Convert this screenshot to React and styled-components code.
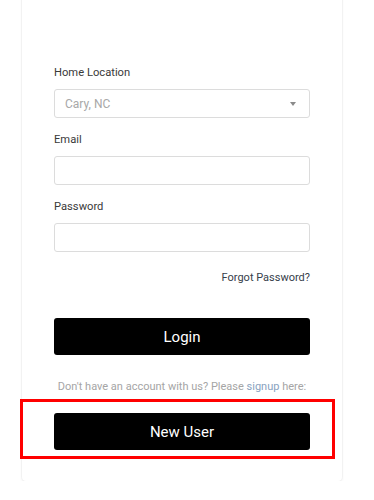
import styled, { createGlobalStyle } from "styled-components";

const GlobalStyle = createGlobalStyle`
  body {
    margin: 0;
    background: #ffffff;
    font-family: Roboto, "Liberation Sans", Arial, sans-serif;
  }
`;

export default function App() {
    return (
        <>
            <GlobalStyle />
            <Page>
                <Card>
                    <Field>
                        <Label>Home Location</Label>
                        <SelectBox>
                            <Placeholder>Cary, NC</Placeholder>
                            <Caret />
                        </SelectBox>
                    </Field>
                    <Field>
                        <Label>Email</Label>
                        <Input type="email" />
                    </Field>
                    <Field>
                        <Label>Password</Label>
                        <Input type="password" />
                    </Field>
                    <ForgotRow>
                        <ForgotLink href="#">Forgot Password?</ForgotLink>
                    </ForgotRow>
                    <BlackButton>Login</BlackButton>
                    <SignupText>
                        Don't have an account with us? Please <SignupLink href="#">signup</SignupLink> here:
                    </SignupText>
                    <Highlighted>
                        <BlackButton>New User</BlackButton>
                    </Highlighted>
                </Card>
            </Page>
        </>
    );
}

const Page = styled.div`
  padding: 0 0 0 22px;
`;

const Card = styled.div`
  width: 320px;
  box-sizing: border-box;
  margin-top: -10px;
  padding: 75px 32px 31px;
  background: #fff;
  border-radius: 4px;
  box-shadow: 0 1px 3px rgba(0, 0, 0, 0.08), 0 0 0 1px rgba(0, 0, 0, 0.025);
  display: flex;
  flex-direction: column;
`;

const Field = styled.div`
  display: flex;
  flex-direction: column;
  gap: 8px;
  margin-bottom: 14px;
`;

const Label = styled.label`
  font-size: 11.2px;
  line-height: 16px;
  color: #3a3a3a;
`;

const SelectBox = styled.div`
  height: 29px;
  box-sizing: border-box;
  border: 1px solid #dcdcdc;
  border-radius: 3px;
  display: flex;
  align-items: center;
  justify-content: space-between;
  padding: 0 13px 0 10px;
`;

const Placeholder = styled.span`
  font-size: 12px;
  color: #a8a8a8;
`;

const Caret = styled.span`
  width: 0;
  height: 0;
  border-left: 3px solid transparent;
  border-right: 3px solid transparent;
  border-top: 4px solid #8a8a8a;
`;

const Input = styled.input`
  height: 29px;
  box-sizing: border-box;
  border: 1px solid #dcdcdc;
  border-radius: 3px;
  padding: 0 10px;
  font-size: 12px;
  outline: none;
`;

const ForgotRow = styled.div`
  display: flex;
  justify-content: flex-end;
  margin-top: 4px;
`;

const ForgotLink = styled.a`
  font-size: 11px;
  line-height: 16px;
  color: #36404a;
  text-decoration: none;
`;

const BlackButton = styled.button`
  width: 100%;
  height: 37px;
  margin-top: 0;
  border: none;
  border-radius: 3px;
  background: #000;
  color: #fff;
  font-family: Roboto, "Liberation Sans", Arial, sans-serif;
  font-size: 15px;
  cursor: pointer;
  ${ForgotRow} + & {
    margin-top: 32px;
  }
`;

const SignupText = styled.p`
  margin: 24px 0 0;
  text-align: center;
  font-size: 11px;
  line-height: 16px;
  color: #a5a5a5;
`;

const SignupLink = styled.a`
  color: #88a2c0;
  text-decoration: none;
`;

const Highlighted = styled.div`
  position: relative;
  margin-top: 18px;
  display: flex;

  &::after {
    content: "";
    position: absolute;
    left: -34px;
    right: -25px;
    top: -14px;
    bottom: -9px;
    border: 3px solid #ff0000;
    pointer-events: none;
  }
`;
